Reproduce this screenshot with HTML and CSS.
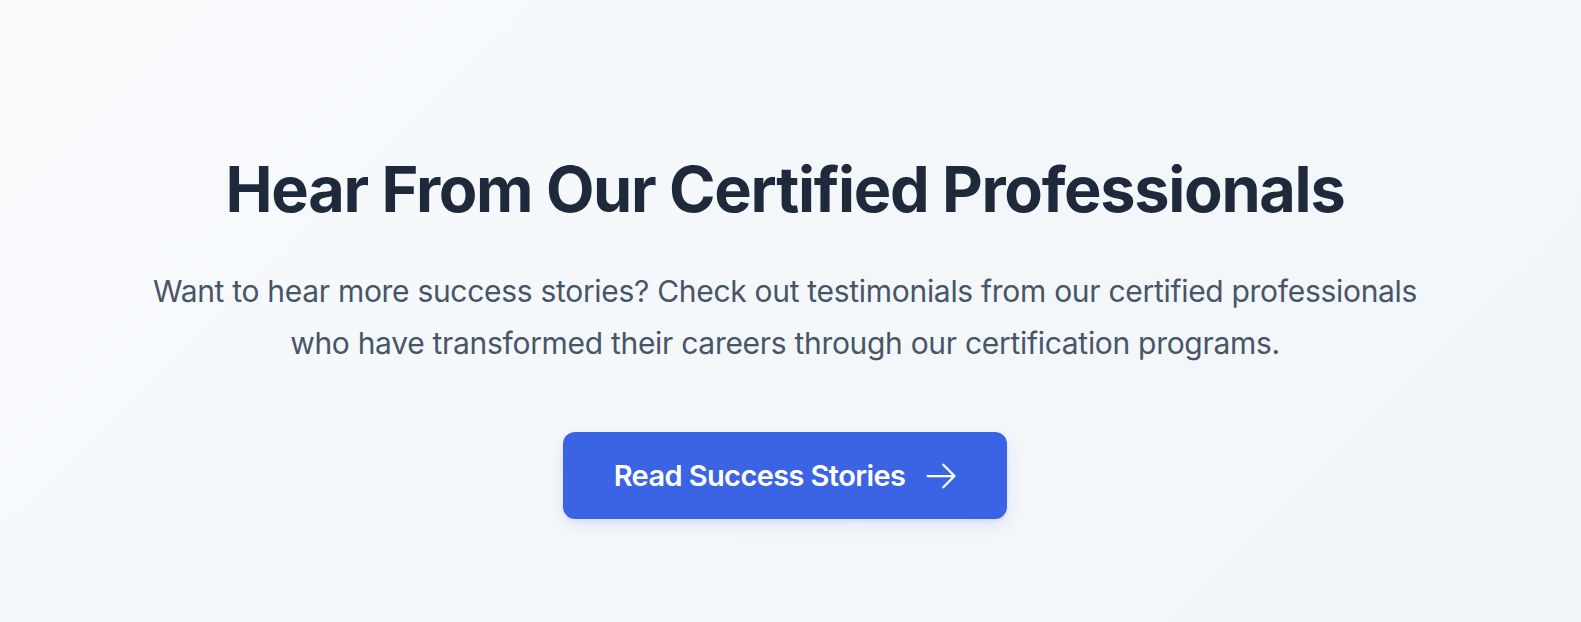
FILE: index.html
```html
<!DOCTYPE html>
<html lang="en">
<head>
<meta charset="utf-8">
<title>Hear From Our Certified Professionals</title>
<link rel="stylesheet" href="styles.css">
</head>
<body>
<section class="hero">
  <h1 class="hero-title">Hear From Our Certified Professionals</h1>
  <p class="hero-text">Want to hear more success stories? Check out testimonials from our certified professionals who have transformed their careers through our certification programs.</p>
  <a class="hero-button" href="#">
    <span>Read Success Stories</span>
    <svg class="hero-arrow" viewBox="0 0 24 24" fill="none" stroke="currentColor" stroke-width="1.5" stroke-linecap="round" stroke-linejoin="round"><path d="M13.5 4.5 21 12m0 0-7.5 7.5M21 12H3"/></svg>
  </a>
</section>
</body>
</html>
```
FILE: styles.css
```css
html, body {
  margin: 0;
  padding: 0;
}
body {
  font-family: Inter, "Noto Sans", sans-serif;
  background: #f5f7fa;
}
.hero {
  min-height: 622px;
  box-sizing: border-box;
  padding: 151px 35px 0 24px;
  display: flex;
  flex-direction: column;
  align-items: center;
  text-align: center;
  background: linear-gradient(135deg, #f8fafc 0%, #f1f5f9 100%);
}
.hero-title {
  margin: 0;
  font-size: 63px;
  line-height: 76px;
  font-weight: 700;
  color: #1e293b;
  letter-spacing: -1.3px;
}
.hero-text {
  margin: 38px 0 0;
  max-width: 1290px;
  font-size: 30px;
  line-height: 52px;
  color: #475569;
  letter-spacing: -0.3px;
}
.hero-button {
  margin-top: 63px;
  display: flex;
  align-items: center;
  gap: 18px;
  height: 87px;
  box-sizing: border-box;
  padding: 0 48px 0 51px;
  background: #3a64e4;
  border-radius: 12px;
  color: #ffffff;
  text-decoration: none;
  font-size: 29px;
  font-weight: 600;
  letter-spacing: -0.6px;
  box-shadow: 0 6px 16px rgba(58, 100, 228, 0.12), 0 2px 4px rgba(15, 23, 42, 0.06);
}
.hero-arrow {
  width: 36px;
  height: 36px;
  flex: none;
}
```
